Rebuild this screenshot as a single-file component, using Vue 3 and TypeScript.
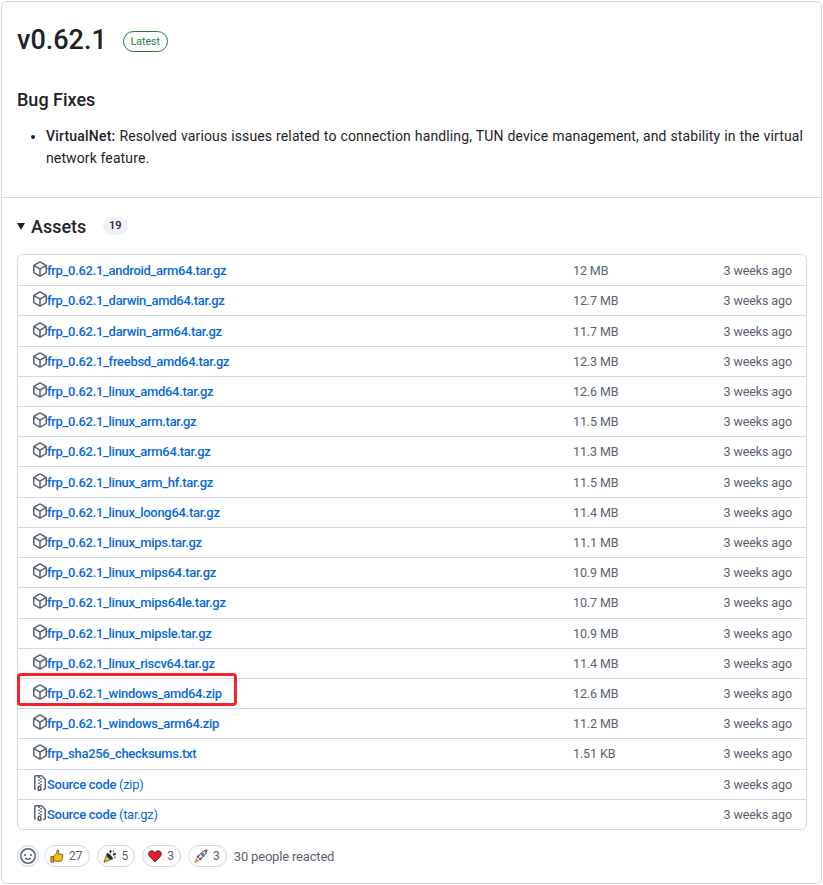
<script setup lang="ts">
interface Asset { name: string; suffix?: string; size: string; source?: boolean; marked?: boolean }
const assets: Asset[] = [
  { name: 'frp_0.62.1_android_arm64.tar.gz', size: '12 MB' },
  { name: 'frp_0.62.1_darwin_amd64.tar.gz', size: '12.7 MB' },
  { name: 'frp_0.62.1_darwin_arm64.tar.gz', size: '11.7 MB' },
  { name: 'frp_0.62.1_freebsd_amd64.tar.gz', size: '12.3 MB' },
  { name: 'frp_0.62.1_linux_amd64.tar.gz', size: '12.6 MB' },
  { name: 'frp_0.62.1_linux_arm.tar.gz', size: '11.5 MB' },
  { name: 'frp_0.62.1_linux_arm64.tar.gz', size: '11.3 MB' },
  { name: 'frp_0.62.1_linux_arm_hf.tar.gz', size: '11.5 MB' },
  { name: 'frp_0.62.1_linux_loong64.tar.gz', size: '11.4 MB' },
  { name: 'frp_0.62.1_linux_mips.tar.gz', size: '11.1 MB' },
  { name: 'frp_0.62.1_linux_mips64.tar.gz', size: '10.9 MB' },
  { name: 'frp_0.62.1_linux_mips64le.tar.gz', size: '10.7 MB' },
  { name: 'frp_0.62.1_linux_mipsle.tar.gz', size: '10.9 MB' },
  { name: 'frp_0.62.1_linux_riscv64.tar.gz', size: '11.4 MB' },
  { name: 'frp_0.62.1_windows_amd64.zip', size: '12.6 MB', marked: true },
  { name: 'frp_0.62.1_windows_arm64.zip', size: '11.2 MB' },
  { name: 'frp_sha256_checksums.txt', size: '1.51 KB' },
  { name: 'Source code', suffix: '(zip)', size: '', source: true },
  { name: 'Source code', suffix: '(tar.gz)', size: '', source: true },
]
const reactions = [
  { kind: 'thumb', count: 27 },
  { kind: 'party', count: 5 },
  { kind: 'heart', count: 3 },
  { kind: 'rocket', count: 3 },
]
</script>

<template>
  <div class="card">
    <header class="head">
      <h1>v0.62.1</h1>
      <span class="latest">Latest</span>
    </header>
    <section class="notes">
      <h2>Bug Fixes</h2>
      <ul>
        <li><strong>VirtualNet:</strong> Resolved various issues related to connection handling, TUN device management, and stability in the virtual network feature.</li>
      </ul>
    </section>
    <section class="assets">
      <div class="assets-title">
        <span class="caret"></span>
        <span class="title">Assets</span>
        <span class="count">19</span>
      </div>
      <div class="box">
        <div v-for="a in assets" :key="a.name + a.suffix" class="row" :class="{ marked: a.marked }">
          <div class="file">
            <svg v-if="!a.source" class="icon" viewBox="0 0 16 16" width="16" height="16" fill="#59636e"><path d="m8.878.392 5.25 3.045c.54.314.872.89.872 1.514v6.098a1.75 1.75 0 0 1-.872 1.514l-5.25 3.045a1.75 1.75 0 0 1-1.756 0l-5.25-3.045A1.75 1.75 0 0 1 1 11.049V4.951c0-.624.332-1.201.872-1.514L7.122.392a1.75 1.75 0 0 1 1.756 0ZM7.875 1.69l-4.63 2.685L8 7.133l4.755-2.758-4.63-2.685a.248.248 0 0 0-.25 0ZM2.5 5.677v5.372c0 .09.047.171.125.216l4.625 2.683V8.432Zm6.25 8.271 4.625-2.683a.25.25 0 0 0 .125-.216V5.677L8.75 8.432Z"/></svg>
            <svg v-else class="icon" viewBox="0 0 16 16" width="16" height="16" fill="#59636e"><path d="M3.5 1.75v11.5c0 .09.048.173.126.217a.75.75 0 0 1-.752 1.298A1.748 1.748 0 0 1 2 13.25V1.75C2 .784 2.784 0 3.75 0h5.586c.464 0 .909.185 1.237.513l2.914 2.914c.329.328.513.773.513 1.237v8.586A1.75 1.75 0 0 1 12.25 15h-.5a.75.75 0 0 1 0-1.5h.5a.25.25 0 0 0 .25-.25V4.664a.25.25 0 0 0-.073-.177L9.513 1.573a.25.25 0 0 0-.177-.073H7.25a.75.75 0 0 1 0 1.5h-.5a.75.75 0 0 1 0-1.5h-3a.25.25 0 0 0-.25.25Zm3.75 8.75h.5c.966 0 1.75.784 1.75 1.75v3a.75.75 0 0 1-.75.75h-2.5a.75.75 0 0 1-.75-.75v-3c0-.966.784-1.75 1.75-1.75ZM6 5.25a.75.75 0 0 1 .75-.75h.5a.75.75 0 0 1 0 1.5h-.5A.75.75 0 0 1 6 5.25Zm.75 2.25h.5a.75.75 0 0 1 0 1.5h-.5a.75.75 0 0 1 0-1.5ZM8 6.75A.75.75 0 0 1 8.75 6h.5a.75.75 0 0 1 0 1.5h-.5A.75.75 0 0 1 8 6.75ZM8.75 3h.5a.75.75 0 0 1 0 1.5h-.5a.75.75 0 0 1 0-1.5ZM8 9.75A.75.75 0 0 1 8.75 9h.5a.75.75 0 0 1 0 1.5h-.5A.75.75 0 0 1 8 9.75Zm-1 2.5v2.25h1v-2.25a.25.25 0 0 0-.25-.25h-.5a.25.25 0 0 0-.25.25Z"/></svg>
            <span class="name">{{ a.name }}<span v-if="a.suffix" class="suffix">&nbsp;{{ a.suffix }}</span></span>
          </div>
          <div class="size">{{ a.size }}</div>
          <div class="age">3 weeks ago</div>
          <span v-if="a.marked" class="mark"></span>
        </div>
      </div>
      <div class="reacts">
        <button class="smile" type="button" aria-label="Add reaction">
          <svg viewBox="0 0 16 16" width="16" height="16" fill="#59636e"><path d="M8 0a8 8 0 1 1 0 16A8 8 0 0 1 8 0ZM1.5 8a6.5 6.5 0 1 0 13 0 6.5 6.5 0 0 0-13 0Zm3.82 1.636a.75.75 0 0 1 1.038.175l.007.009c.103.118.22.222.35.31.264.178.683.37 1.285.37.602 0 1.02-.192 1.285-.371.13-.088.247-.192.35-.31l.007-.008a.75.75 0 0 1 1.222.87l-.022-.015c.02.013.021.015.021.015v.001l-.001.002-.002.003-.005.007-.014.019a2.066 2.066 0 0 1-.184.213c-.16.166-.338.316-.53.445-.63.418-1.37.638-2.127.629-.946 0-1.652-.308-2.126-.63a3.331 3.331 0 0 1-.715-.657l-.014-.02-.005-.006-.002-.003v-.002h-.001l.613-.432-.614.43a.75.75 0 0 1 .183-1.044ZM12 7a1 1 0 1 1-2 0 1 1 0 0 1 2 0ZM5 8a1 1 0 1 1 0-2 1 1 0 0 1 0 2Zm5.25 2.25.592.416a97.71 97.71 0 0 0-.592-.416Z"/></svg>
        </button>
        <span v-for="r in reactions" :key="r.kind" class="pill">
          <svg class="emoji" viewBox="0 0 16 16" width="14" height="14">
            <template v-if="r.kind === 'thumb'">
              <path d="M1 8.5h3.2V15H1Z" fill="#e8a317" stroke="#5c4a10" stroke-width=".9"/>
              <path d="M4.2 8.3 7.2 5c.6-.8.8-2 .9-3.600.1-.7 1.900-.5 2 1.100.1 1.200-.4 2.500-.8 3.500h4.300c1.500 0 1.500 2 .6 2.300.8.500.6 1.800-.2 2.100.5.700.1 1.700-.6 1.900.2.900-.3 1.700-1.300 1.700H7c-1.200 0-1.900-.3-2.800-.6Z" fill="#f6b81f" stroke="#5c4a10" stroke-width=".9" stroke-linejoin="round"/>
            </template>
            <template v-else-if="r.kind === 'party'">
              <path d="M1 15.200 4.800 4.600l6.600 6.600Z" fill="#f7c325" stroke="#4d3d0c" stroke-width=".8" stroke-linejoin="round"/>
              <path d="M5 5c1.800-.4 5.400 3.300 6.300 6.100L8 12.300 4 8Z" fill="#1c2b4a"/>
              <path d="M7 3 8.500.8l1.600 1.500L8.600 5ZM11 5.500l3.300-1.300.7 2.300-3 1.300Z" fill="#27324f"/>
              <circle cx="12" cy="2.600" r="1" fill="#d8332f"/>
              <circle cx="13.600" cy="9.600" r="1" fill="#2f6fd8"/>
            </template>
            <template v-else-if="r.kind === 'heart'">
              <path d="M8 14.800 1.700 8.300C-.4 6 .9 2 4.300 2 6 2 7.300 3 8 4.200 8.700 3 10 2 11.700 2c3.400 0 4.700 4 2.600 6.300Z" fill="#e0202c" stroke="#4a0f14" stroke-width=".9" stroke-linejoin="round"/>
            </template>
            <template v-else>
              <path d="M1 15c.2-2 .8-3.300 2-4l2 2c-.8 1.200-2 1.800-4 2Z" fill="#f6b81f" stroke="#8a4a10" stroke-width=".6"/>
              <path d="M2.800 8.400 6 6.200l-.6 3.900-1.400.6ZM7.600 13.200l2.200-3.200-3.900.6-.6 1.400Z" fill="#d8332f"/>
              <path d="M4.600 9.200C6.800 5 10 1.800 15 1c-.7 5-4 8.200-8.200 10.400Z" fill="#dfe7f2" stroke="#243a63" stroke-width=".9" stroke-linejoin="round"/>
              <path d="M11 1.800 15 1c-.2 1.400-.5 2.700-1 3.900Z" fill="#d8332f"/>
              <circle cx="9.800" cy="6.200" r="1.500" fill="#2aa8e0" stroke="#243a63" stroke-width=".6"/>
            </template>
          </svg>
          <span class="num">{{ r.count }}</span>
        </span>
        <span class="people">30 people reacted</span>
      </div>
    </section>
  </div>
</template>

<style>
html, body { margin: 0; background: #fff; }
</style>

<style scoped>
.card {
  box-sizing: border-box;
  width: 821px;
  height: 883px;
  margin: 1px 0 0 1px;
  border: 1px solid #d1d9e0;
  border-radius: 6px;
  background: #fff;
  color: #1f2328;
  font-family: Roboto, "Noto Sans", sans-serif;
  font-size: 14px;
  overflow: hidden;
}
.head { display: flex; align-items: center; padding: 17px 15px 0; height: 42px; }
h1 { margin: 0; font-size: 27px; line-height: 42px; font-weight: 500; }
.latest {
  margin-left: 16px;
  box-sizing: border-box;
  height: 21px;
  width: 45px;
  text-align: center;
  margin-top: 3px;
  border: 1px solid #1a7f37;
  border-radius: 11px;
  color: #1a7f37;
  font-size: 10.5px;
  line-height: 19px;
  font-weight: 400;
}
.notes { padding: 27px 15px 0; height: 137px; box-sizing: border-box; border-bottom: 1px solid #d1d9e0; }
h2 { margin: 0; font-size: 18px; line-height: 24px; font-weight: 500; }
ul { margin: 13px 0 0; padding: 0 3px 0 29px; }
li { line-height: 22px; font-size: 14px; text-align: justify; letter-spacing: .12px; }
strong { font-weight: 500; letter-spacing: .2px; }
.assets { padding: 15px 15px 0; }
.assets-title { display: flex; align-items: center; height: 26px; }
.caret { width: 0; height: 0; border-left: 4px solid transparent; border-right: 4px solid transparent; border-top: 7px solid #1f2328; }
.title { margin-left: 6px; font-size: 18px; font-weight: 500; width: 51px; }
.count { margin-left: 21px; background: #eff2f5; border-radius: 10px; padding: 0 6px; font-size: 11px; line-height: 18px; font-weight: 500; }
.box { margin-top: 15px; width: 790px; height: 576px; border: 1px solid #d1d9e0; border-radius: 6px; box-sizing: border-box; display: grid; grid-template-rows: repeat(19, 1fr); }
.row { position: relative; display: flex; align-items: center; padding: 0 14px; border-top: 1px solid #d1d9e0; color: #59636e; font-size: 12.5px; letter-spacing: -.1px; }
.row:first-child { border-top: 0; }
.file { display: flex; align-items: center; width: 541px; }
.icon { flex: none; margin-top: -3px; margin-right: -1px; }
.name { color: #0969da; font-weight: 500; font-size: 13px; letter-spacing: -.3px; }
.suffix { font-weight: 400; }
.size { width: 120px; }
.age { flex: 1; text-align: right; }
.mark { position: absolute; left: -1px; top: -6px; width: 214px; height: 27px; border: 3px solid #f5222d; border-radius: 4px; }
.reacts { display: flex; align-items: center; margin-top: 15px; gap: 7px; }
.smile { width: 22px; height: 22px; margin-right: -2px; padding: 0; display: flex; align-items: center; justify-content: center; background: #f6f8fa; border: 1px solid #d1d9e0; border-radius: 50%; }
.pill { display: flex; align-items: center; box-sizing: border-box; height: 22px; padding: 0 6px 0 5px; gap: 5px; border: 1px solid #d1d9e0; border-radius: 11px; color: #59636e; font-size: 12px; }
.people { color: #59636e; font-size: 13px; letter-spacing: -.18px; }
</style>
